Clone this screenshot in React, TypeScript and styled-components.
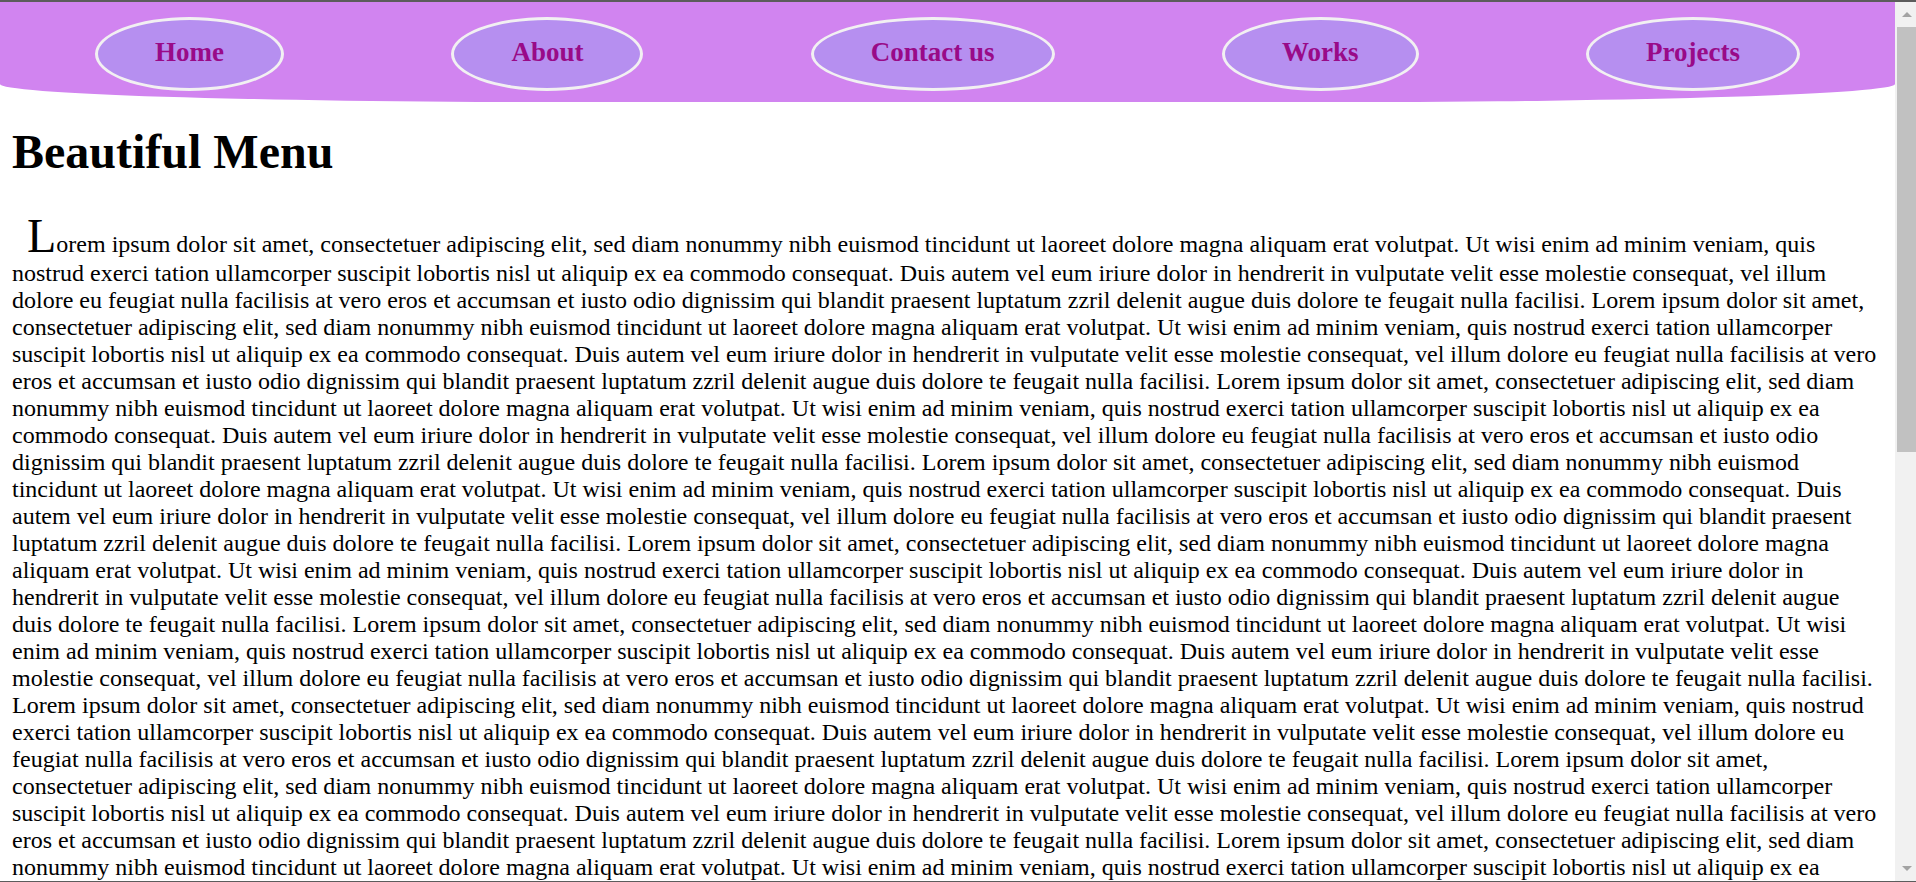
import React from "react";
import styled, { createGlobalStyle } from "styled-components";

const GlobalStyle = createGlobalStyle`
  html, body {
    margin: 0;
    height: 100%;
  }
  body {
    box-sizing: border-box;
    border-top: 2px solid #5c5c5c;
    border-bottom: 1px solid #5c5c5c;
    overflow: hidden;
    background: #ffffff;
    font-family: "Liberation Serif", "Times New Roman", serif;
    color: #000000;
  }
  #root {
    height: 100%;
  }
`;

const Frame = styled.div`
  display: flex;
  height: 100%;
`;

const Scroller = styled.div`
  flex: 1;
  min-width: 0;
  height: 100%;
  overflow-y: auto;
  overflow-x: hidden;
  scrollbar-width: none;
  &::-webkit-scrollbar {
    display: none;
  }
`;

const ScrollBar = styled.div`
  flex: 0 0 21px;
  display: flex;
  flex-direction: column;
  background: #f1f1f1;
`;

const ScrollButton = styled.div<{ $down?: boolean }>`
  flex: 0 0 25px;
  display: flex;
  align-items: center;
  justify-content: center;
  padding-left: 2px;

  &::before {
    content: "";
    width: 0;
    height: 0;
    border-left: 5px solid transparent;
    border-right: 5px solid transparent;
    ${(p) =>
      p.$down
        ? "border-top: 5px solid #a3a3a3;"
        : "border-bottom: 5px solid #a3a3a3;"}
  }
`;

const ScrollThumb = styled.div`
  flex: 0 0 425px;
  margin-left: 2px;
  background: #c1c1c1;
`;

const ScrollRest = styled.div`
  flex: 1;
`;

const Nav = styled.nav`
  box-sizing: border-box;
  height: 100px;
  background: #d184f0;
  border-bottom-left-radius: 560px 18px;
  border-bottom-right-radius: 560px 18px;
  padding: 15px 95px 0;
`;

const NavList = styled.ul`
  list-style: none;
  margin: 0;
  padding: 0;
  display: flex;
  justify-content: space-between;
  align-items: flex-start;
`;

const NavItem = styled.li`
  display: block;
`;

const NavLink = styled.a`
  display: block;
  box-sizing: border-box;
  padding: 17px 57px 20px;
  border: 3px solid #f2f0f2;
  border-radius: 50%;
  background: #b68ff0;
  color: #990a88;
  font-family: "Liberation Serif", "Times New Roman", serif;
  font-weight: bold;
  font-size: 27px;
  line-height: 31px;
  text-decoration: none;
  white-space: nowrap;
`;

const Main = styled.main`
  padding: 0 12px;
`;

const Title = styled.h1`
  margin: 22px 0 32px;
  font-size: 48px;
  font-weight: bold;
`;

const Body = styled.p`
  margin: 0 0 24px;
  font-size: 24px;
  text-indent: 15px;

  &::first-letter {
    font-size: 48px;
    line-height: 49px;
  }
`;

const items = ["Home", "About", "Contact us", "Works", "Projects"];

const block =
  "Lorem ipsum dolor sit amet, consectetuer adipiscing elit, sed diam nonummy nibh euismod tincidunt ut laoreet dolore magna aliquam erat volutpat. Ut wisi enim ad minim veniam, quis nostrud exerci tation ullamcorper suscipit lobortis nisl ut aliquip ex ea commodo consequat. Duis autem vel eum iriure dolor in hendrerit in vulputate velit esse molestie consequat, vel illum dolore eu feugiat nulla facilisis at vero eros et accumsan et iusto odio dignissim qui blandit praesent luptatum zzril delenit augue duis dolore te feugait nulla facilisi.";

const text = Array.from({ length: 19 }, () => block).join(" ");

export default function App() {
  return (
    <>
      <GlobalStyle />
      <Frame>
        <Scroller>
          <Nav>
            <NavList>
              {items.map((label) => (
                <NavItem key={label}>
                  <NavLink href="#">{label}</NavLink>
                </NavItem>
              ))}
            </NavList>
          </Nav>
          <Main>
            <Title>Beautiful Menu</Title>
            <Body>{text}</Body>
          </Main>
        </Scroller>
        <ScrollBar aria-hidden="true">
          <ScrollButton />
          <ScrollThumb />
          <ScrollRest />
          <ScrollButton $down />
        </ScrollBar>
      </Frame>
    </>
  );
}
